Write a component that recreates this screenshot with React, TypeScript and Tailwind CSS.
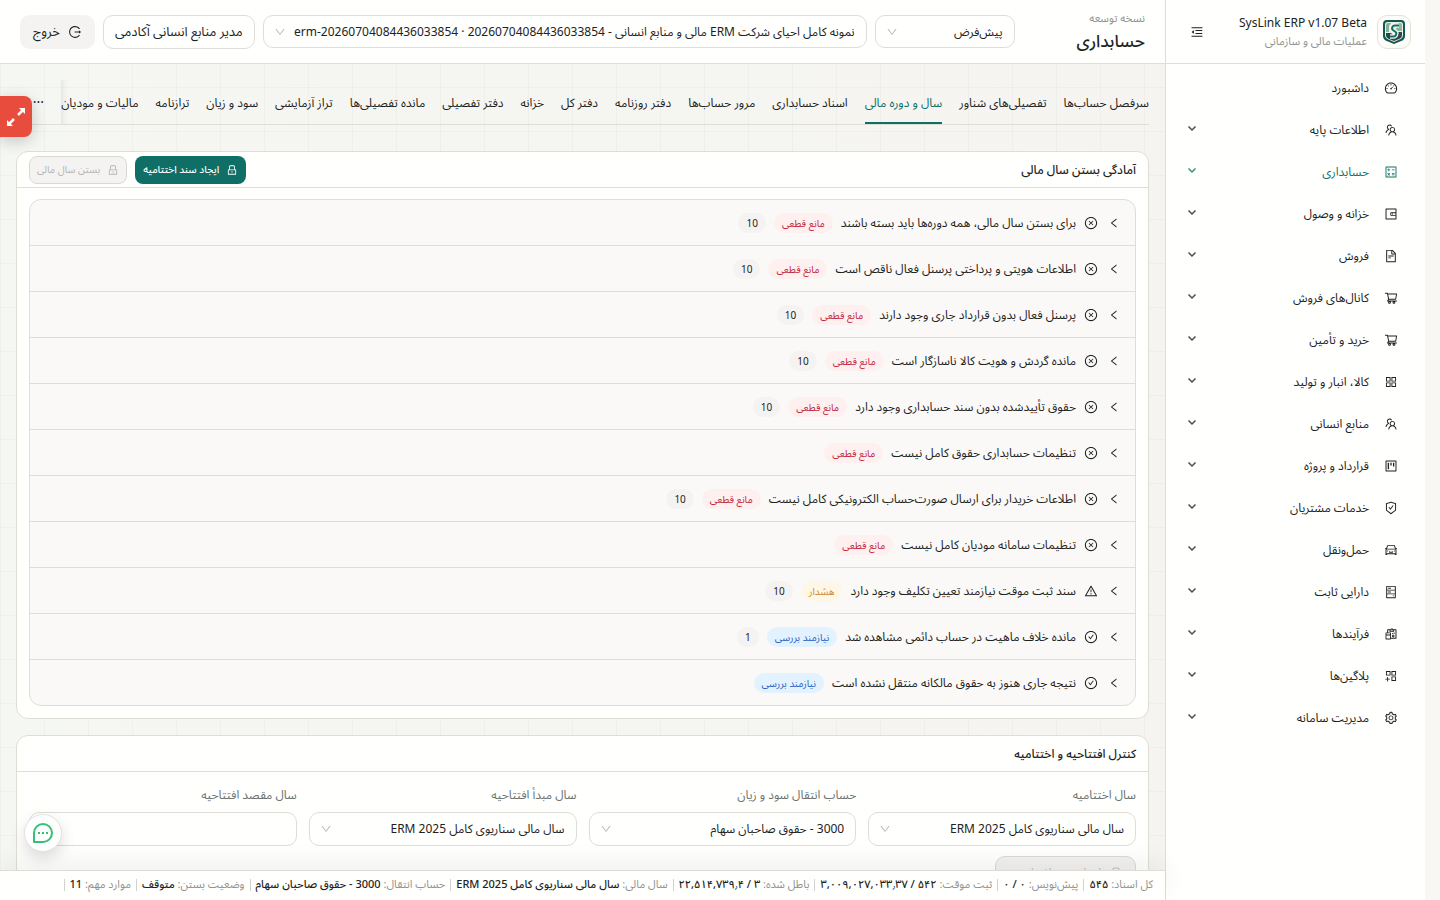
import type { ReactNode } from "react";
import type { IconType } from "react-icons";
import {
  AiOutlineAppstore,
  AiOutlineAppstoreAdd,
  AiOutlineCalculator,
  AiOutlineCar,
  AiOutlineCheckCircle,
  AiOutlineCloseCircle,
  AiOutlineDashboard,
  AiOutlineDown,
  AiOutlineFileText,
  AiOutlineHdd,
  AiOutlineLeft,
  AiOutlineLock,
  AiOutlineLogout,
  AiOutlineMenuFold,
  AiOutlineProject,
  AiOutlineReconciliation,
  AiOutlineSafetyCertificate,
  AiOutlineSetting,
  AiOutlineShoppingCart,
  AiOutlineTeam,
  AiOutlineWallet,
  AiOutlineWarning,
} from "react-icons/ai";
import clsx from "clsx";

type Severity = "block" | "warn" | "review";

const MENU: { label: string; icon: IconType; leaf?: boolean; active?: boolean }[] = [
  { label: "داشبورد", icon: AiOutlineDashboard, leaf: true },
  { label: "اطلاعات پایه", icon: AiOutlineTeam },
  { label: "حسابداری", icon: AiOutlineCalculator, active: true },
  { label: "خزانه و وصول", icon: AiOutlineWallet },
  { label: "فروش", icon: AiOutlineFileText },
  { label: "کانال‌های فروش", icon: AiOutlineShoppingCart },
  { label: "خرید و تأمین", icon: AiOutlineShoppingCart },
  { label: "کالا، انبار و تولید", icon: AiOutlineAppstore },
  { label: "منابع انسانی", icon: AiOutlineTeam },
  { label: "قرارداد و پروژه", icon: AiOutlineProject },
  { label: "خدمات مشتریان", icon: AiOutlineSafetyCertificate },
  { label: "حمل‌ونقل", icon: AiOutlineCar },
  { label: "دارایی ثابت", icon: AiOutlineHdd },
  { label: "فرآیندها", icon: AiOutlineReconciliation },
  { label: "پلاگین‌ها", icon: AiOutlineAppstoreAdd },
  { label: "مدیریت سامانه", icon: AiOutlineSetting },
];

const TABS = [
  "سرفصل حساب‌ها",
  "تفصیلی‌های شناور",
  "سال و دوره مالی",
  "اسناد حسابداری",
  "مرور حساب‌ها",
  "دفتر روزنامه",
  "دفتر کل",
  "خزانه",
  "دفتر تفصیلی",
  "مانده تفصیلی‌ها",
  "تراز آزمایشی",
  "سود و زیان",
  "ترازنامه",
  "مالیات و مودیان",
];
const ACTIVE_TAB = "سال و دوره مالی";

const CHECKS: { title: string; severity: Severity; count?: number }[] = [
  { title: "برای بستن سال مالی، همه دوره‌ها باید بسته باشند", severity: "block", count: 10 },
  { title: "اطلاعات هویتی و پرداختی پرسنل فعال ناقص است", severity: "block", count: 10 },
  { title: "پرسنل فعال بدون قرارداد جاری وجود دارند", severity: "block", count: 10 },
  { title: "مانده گردش و هویت کالا ناسازگار است", severity: "block", count: 10 },
  { title: "حقوق تأییدشده بدون سند حسابداری وجود دارد", severity: "block", count: 10 },
  { title: "تنظیمات حسابداری حقوق کامل نیست", severity: "block" },
  { title: "اطلاعات خریدار برای ارسال صورت‌حساب الکترونیکی کامل نیست", severity: "block", count: 10 },
  { title: "تنظیمات سامانه مودیان کامل نیست", severity: "block" },
  { title: "سند ثبت موقت نیازمند تعیین تکلیف وجود دارد", severity: "warn", count: 10 },
  { title: "مانده خلاف ماهیت در حساب دائمی مشاهده شد", severity: "review", count: 1 },
  { title: "نتیجه جاری هنوز به حقوق مالکانه منتقل نشده است", severity: "review" },
];

const SEVERITY: Record<Severity, { label: string; icon: IconType; className: string }> = {
  block: { label: "مانع قطعی", icon: AiOutlineCloseCircle, className: "bg-[#fff0f0] text-[#c0263c]" },
  warn: { label: "هشدار", icon: AiOutlineWarning, className: "bg-[#fff7e6] text-[#d08a2e]" },
  review: { label: "نیازمند بررسی", icon: AiOutlineCheckCircle, className: "bg-[#e3f2ff] text-[#2a62c4]" },
};

const FIELDS = [
  { id: "closing-year", label: "سال اختتامیه", value: "سال مالی سناریوی کامل ERM 2025" },
  { id: "transfer-account", label: "حساب انتقال سود و زیان", value: "3000 - حقوق صاحبان سهام" },
  { id: "source-year", label: "سال مبدأ افتتاحیه", value: "سال مالی سناریوی کامل ERM 2025" },
];

const STATUS = [
  { label: "کل اسناد", value: "۵۴۵" },
  { label: "پیش‌نویس", value: "۰ / ۰" },
  { label: "ثبت موقت", value: "۵۴۲ / ۳,۰۰۹,۰۲۷,۰۳۳٫۳۷" },
  { label: "باطل شده", value: "۳ / ۲۲,۵۱۴,۷۳۹٫۴" },
  { label: "سال مالی", value: "سال مالی سناریوی کامل ERM 2025" },
  { label: "حساب انتقال", value: "3000 - حقوق صاحبان سهام" },
  { label: "وضعیت بستن", value: "متوقف" },
  { label: "موارد مهم", value: "11" },
];

function Logo() {
  return (
    <span className="flex size-[34px] shrink-0 items-center justify-center rounded-[10px] border border-[#e5e1da] bg-[#fdfcf9]">
      <svg viewBox="0 0 24 26" className="h-[26px] w-6" aria-hidden="true">
        <path d="M5 1h14a4 4 0 0 1 4 4v12c0 3-2 4.500-5 5.500L12 25l-6-2.500C3 21.500 1 20 1 17V5a4 4 0 0 1 4-4Z" fill="#12594f" />
        <path d="M5.500 3h13A2.500 2.500 0 0 1 21 5.500V16c0 2.500-1.500 4-4 4.800L12 23l-5-2.200C4.500 20 3 18.500 3 16V5.500A2.500 2.500 0 0 1 5.500 3Z" fill="#e9f0e6" />
        <path d="M14 4h4a2 2 0 0 1 2 2v6h-6Z" fill="#8db79b" />
        <path d="M4 6a2 2 0 0 1 2-2h3L7 7v6H4Z" fill="#86b097" />
        <path d="M4 14h5l3 3v5l-5-2c-2-1-3-2-3-4Z" fill="#24474a" />
        <path d="M14 13h6v3c0 2-1 3-3 4l-5 2v-4Z" fill="#33474d" />
        <path d="M17 6.500h-4c-3 0-4 3.500-1.500 5l1.500 1c2.500 1.500 1 5-1.500 5H8" fill="none" stroke="#f4f7f2" strokeWidth="4.500" />
        <path d="M17 6.500h-4c-3 0-4 3.500-1.500 5l1.500 1c2.500 1.500 1 5-1.500 5H8" fill="none" stroke="#15705f" strokeWidth="2" />
      </svg>
    </span>
  );
}

function SelectBox({ id, value, label, className }: { id: string; value: string; label?: string; className?: string }) {
  return (
    <div className={clsx("relative", className)}>
      <select
        id={id}
        aria-label={label}
        defaultValue={value}
        className="h-full w-full appearance-none rounded-[10px] border border-[#dfddd8] bg-[#fffffd] ps-[11px] pe-7 text-xs text-[#1d2322]"
      >
        <option>{value}</option>
      </select>
      <AiOutlineDown className="pointer-events-none absolute end-[11px] top-1/2 size-3 -translate-y-1/2 text-[#b9b9b6]" />
    </div>
  );
}

function Panel({ title, actions, children }: { title: string; actions?: ReactNode; children: ReactNode }) {
  return (
    <section className="rounded-xl border border-[#e0ddd6] bg-[#fffffd]">
      <header className="flex h-9 items-center justify-between border-b border-[#e0ddd6] px-3">
        <h2 className="text-xs font-medium">{title}</h2>
        {actions}
      </header>
      {children}
    </section>
  );
}

function Sidebar() {
  return (
    <aside className="flex w-[260px] shrink-0 flex-col border-e border-[#e0ddd6] bg-[#fffffd]">
      <div className="flex h-16 shrink-0 items-center gap-[10px] border-b border-[#e0ddd6] ps-[14px] pe-6">
        <Logo />
        <div className="flex-1">
          <div className="text-xs leading-[18px]">SysLink ERP v1.07 Beta</div>
          <div className="text-[11px] leading-[18px] text-[#8f9391]">عملیات مالی و سازمانی</div>
        </div>
        <button type="button" aria-label="جمع کردن منو" className="flex h-6 items-center justify-center">
          <AiOutlineMenuFold className="size-[14px]" />
        </button>
      </div>
      <nav className="flex flex-col pt-[3px]">
        {MENU.map(({ label, icon: Icon, leaf, active }) => (
          <a
            key={label}
            href="#"
            className={clsx("flex h-[42px] items-center gap-[15px] ps-[27px] pe-5 text-xs", active && "text-[#0f7268]")}
          >
            <Icon className="size-[14px] shrink-0" />
            <span className="flex-1">{label}</span>
            {!leaf && (
              <svg viewBox="0 0 12 12" className="size-3 opacity-80" aria-hidden="true">
                <path d="m2.500 2.500 3.500 3.500 3.500-3.500" fill="none" stroke="currentColor" strokeWidth="1.500" />
              </svg>
            )}
          </a>
        ))}
      </nav>
    </aside>
  );
}

function Topbar() {
  return (
    <header className="flex h-16 shrink-0 items-center justify-between border-b border-[#e0ddd6] bg-[#fffffd] px-5">
      <div>
        <div className="text-[11px] leading-[18px] text-[#8f9391]">نسخه توسعه</div>
        <h1 className="text-[17px] leading-7 font-medium">حسابداری</h1>
      </div>
      <div className="flex items-center gap-2">
        <SelectBox id="branch" label="شعبه" value="پیش‌فرض" className="h-[33px] w-[140px]" />
        <SelectBox
          id="company"
          label="شرکت"
          value="نمونه کامل احیای شرکت ERM مالی و منابع انسانی - 20260704084436033854 · erm-20260704084436033854"
          className="h-[33px] w-[604px]"
        />
        <button type="button" className="h-[34px] rounded-[10px] border border-[#dfddd8] bg-[#fffffd] px-[11px] text-[13px]">
          مدیر منابع انسانی آکادمی
        </button>
        <button type="button" className="flex h-[34px] items-center gap-2 rounded-[10px] bg-[#f4f3f1] px-[13px] text-[13px]">
          <AiOutlineLogout className="size-[14px]" />
          خروج
        </button>
      </div>
    </header>
  );
}

function TabBar() {
  return (
    <div className="mb-[26px] flex h-[45px] border-b border-[#e0ddd6]">
      <div role="tablist" className="flex min-w-0 flex-1 gap-[17px] overflow-hidden shadow-[inset_8px_0_8px_-8px_rgba(0,0,0,0.12)]">
        {TABS.map((tab) => (
          <button
            key={tab}
            type="button"
            role="tab"
            aria-selected={tab === ACTIVE_TAB}
            className={clsx(
              "shrink-0 border-b-2 pt-1 text-xs",
              tab === ACTIVE_TAB ? "border-[#0f6f66] text-[#0f6f66]" : "border-transparent",
            )}
          >
            {tab}
          </button>
        ))}
      </div>
      <button type="button" aria-label="بیشتر" className="w-[45px] text-sm">
        ···
      </button>
    </div>
  );
}

function CheckList() {
  return (
    <ul className="m-3 mt-[11px] overflow-hidden rounded-xl border border-[#dfddd8] bg-[#faf9f7]">
      {CHECKS.map(({ title, severity, count }) => {
        const { label, icon: Icon, className } = SEVERITY[severity];
        return (
          <li key={title} className="border-b border-[#e0ddd6] last:border-b-0">
            <button type="button" aria-expanded="false" className="flex h-[45px] w-full items-center gap-2 px-[15px] text-xs">
              <AiOutlineLeft className="me-[2px] size-3" />
              <Icon className="size-[14px]" />
              <span>{title}</span>
              <span className={clsx("h-5 rounded-full px-2 text-[10px] leading-5", className)}>{label}</span>
              {count !== undefined && (
                <span className="h-5 rounded-full bg-[#f4f3f1] px-2 text-[10px] leading-5">{count}</span>
              )}
            </button>
          </li>
        );
      })}
    </ul>
  );
}

function OpeningForm() {
  return (
    <form className="grid grid-cols-4 gap-x-3 gap-y-[10px] p-3">
      {FIELDS.map(({ id, label, value }) => (
        <div key={id}>
          <label htmlFor={id} className="block h-7 text-xs leading-[22px] text-[#6b726f]">
            {label}
          </label>
          <SelectBox id={id} value={value} className="h-[34px]" />
        </div>
      ))}
      <div>
        <label htmlFor="target-year" className="block h-7 text-xs leading-[22px] text-[#6b726f]">
          سال مقصد افتتاحیه
        </label>
        <input
          id="target-year"
          type="text"
          className="h-[34px] w-full rounded-[10px] border border-[#dfddd8] bg-[#fffffd] px-3 text-xs"
        />
      </div>
      <button
        type="button"
        disabled
        className="flex h-[34px] w-[141px] items-center gap-2 rounded-[10px] border border-[#d9d8d5] bg-[#f2f1ef] px-3 text-xs whitespace-nowrap text-[#bdbdbb]"
      >
        <AiOutlineLock className="size-[14px]" />
        ایجاد سند افتتاحیه
      </button>
    </form>
  );
}

function StatusBar() {
  return (
    <footer className="z-10 flex h-[30px] shrink-0 items-center gap-[5px] border-t border-[#dedcd7] bg-[#fffffd] px-3 pb-[2px] text-[11px] whitespace-nowrap shadow-[0_-8px_24px_rgba(0,0,0,0.06)]">
      {STATUS.map(({ label, value }) => (
        <div key={label} className="flex items-center gap-[5px]">
          <span className="text-[#8f9391]">
            {label}: <strong className="font-medium text-[#1d2322]">{value}</strong>
          </span>
          <span className="h-3 w-px bg-[#d2d1cd]" />
        </div>
      ))}
    </footer>
  );
}

export default function App() {
  return (
    <div
      dir="rtl"
      lang="fa"
      className="relative flex h-screen overflow-hidden bg-[#f8f7f4] ps-[15px] font-['Noto_Sans','Noto_Sans_Arabic','DejaVu_Sans',sans-serif] text-xs text-[#1d2322]"
    >
      <Sidebar />
      <div className="flex min-w-0 flex-1 flex-col">
        <Topbar />
        <main className="min-h-0 flex-1 overflow-hidden bg-[#f6f5f2] bg-[linear-gradient(rgba(40,60,50,0.03)_1px,transparent_1px),linear-gradient(90deg,rgba(40,60,50,0.03)_1px,transparent_1px),linear-gradient(90deg,#f5f7f3,#f5f4f1)] bg-[size:44px_44px,44px_44px,100%_100%] bg-[position:0_23px,0_0,0_0] px-4 pt-4">
          <TabBar />
          <div className="flex flex-col gap-4">
            <Panel
              title="آمادگی بستن سال مالی"
              actions={
                <div className="flex gap-2">
                  <button type="button" className="flex h-7 items-center gap-[7px] rounded-lg bg-[#0f6f66] px-2 text-[10px] font-medium text-white">
                    <AiOutlineLock className="size-3" />
                    ایجاد سند اختتامیه
                  </button>
                  <button
                    type="button"
                    disabled
                    className="flex h-7 items-center gap-[7px] rounded-lg border border-[#d9d8d5] bg-[#f4f3f1] px-[7px] text-[10px] text-[#b5b5b3]"
                  >
                    <AiOutlineLock className="size-3" />
                    بستن سال مالی
                  </button>
                </div>
              }
            >
              <CheckList />
            </Panel>
            <Panel title="کنترل افتتاحیه و اختتامیه">
              <OpeningForm />
            </Panel>
          </div>
        </main>
        <StatusBar />
      </div>

      <button
        type="button"
        aria-label="تمام صفحه"
        className="absolute top-24 left-0 z-20 flex h-[41px] w-8 items-center justify-center rounded-r-lg bg-[#e84c3d] shadow-[0_4px_16px_rgba(0,0,0,0.2)]"
      >
        <svg viewBox="0 0 20 20" className="size-5" fill="#fff" stroke="#fff" aria-hidden="true">
          <path d="m12 8 5-5M8 12l-5 5" strokeWidth="2.500" />
          <path d="M13 1h6v6ZM7 19H1v-6Z" strokeWidth="0" />
        </svg>
      </button>
      <button
        type="button"
        aria-label="گفتگو"
        className="absolute bottom-12 left-6 z-20 flex size-[38px] items-center justify-center rounded-full border border-[#e6e2dd] bg-white shadow-[0_6px_16px_rgba(0,0,0,0.14)]"
      >
        <svg viewBox="0 0 20 20" className="size-5" fill="none" stroke="#35c073" strokeWidth="2" aria-hidden="true">
          <path d="M1 19v-9a9 9 0 1 1 9 9Z" strokeLinejoin="round" />
          <path d="M5 10h2M9 10h2M13 10h2" />
        </svg>
      </button>
    </div>
  );
}
